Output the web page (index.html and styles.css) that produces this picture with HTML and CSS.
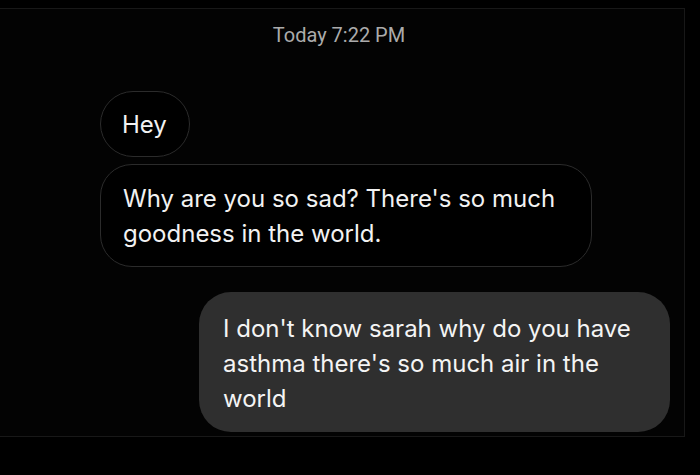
FILE: index.html
```html
<!DOCTYPE html>
<html>
<head>
<meta charset="utf-8">
<link rel="stylesheet" href="styles.css">
</head>
<body>
<div class="panel">
  <div class="stamp">Today 7:22 PM</div>
  <div class="thread">
    <div class="bubble in hey">Hey</div>
    <div class="bubble in why">Why are you so sad? There's so much goodness in the world.</div>
    <div class="bubble out">I don't know sarah why do you have asthma there's so much air in the world</div>
  </div>
</div>
</body>
</html>
```
FILE: styles.css
```css
html, body {
  margin: 0;
  padding: 0;
  background: #000;
}
body {
  font-family: Inter, Roboto, "Noto Sans", sans-serif;
  color: #f2f2f2;
  width: 700px;
  height: 475px;
  overflow: hidden;
}
.panel {
  margin-top: 8px;
  width: 685px;
  height: 429px;
  box-sizing: border-box;
  background: #030303;
  border-top: 1px solid #181818;
  border-right: 1px solid #181818;
  border-bottom: 1px solid #181818;
  display: flex;
  flex-direction: column;
}
.stamp {
  margin-top: 14px;
  text-align: center;
  font-family: Roboto, "Noto Sans", sans-serif;
  font-size: 20px;
  line-height: 24px;
  color: #ababab;
  padding-right: 6px;
}
.thread {
  margin-top: 44px;
  display: flex;
  flex-direction: column;
}
.bubble {
  font-size: 24px;
  line-height: 35px;
  box-sizing: border-box;
  border-radius: 33px;
}
.in {
  align-self: flex-start;
  margin-left: 100px;
  border: 1px solid #2b2b2b;
  background: #000;
  padding: 16px 22px 15px;
}
.hey {
  padding: 15px 21px 14px;
  width: 90px;
}
.why {
  margin-top: 7px;
  width: 492px;
  border-radius: 32px;
}
.out {
  align-self: flex-end;
  margin-right: 14px;
  margin-top: 25px;
  width: 471px;
  background: #2f2f2f;
  padding: 19px 30px 16px 24px;
  border-radius: 32px;
  color: #f4f4f4;
}
```
